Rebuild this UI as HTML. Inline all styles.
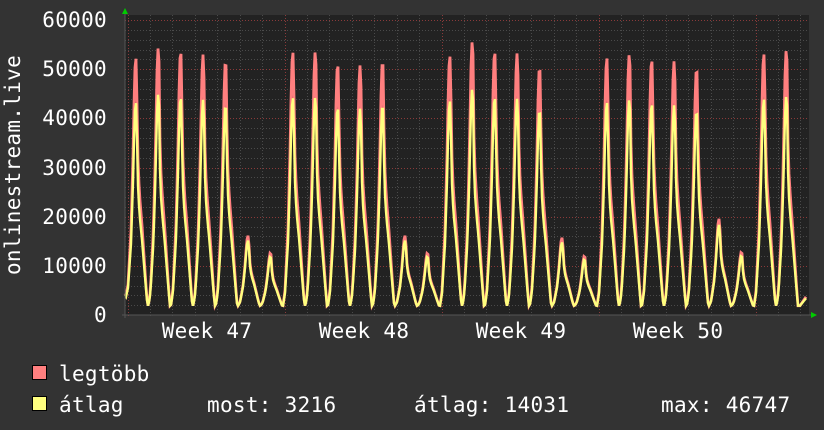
<!DOCTYPE html>
<html><head><meta charset="utf-8"><style>
body{margin:0;width:824px;height:430px;background:#333;overflow:hidden}
svg{display:block}
text{font-family:"DejaVu Sans Mono","Liberation Mono",monospace;font-size:21px;letter-spacing:0.3px;fill:#fff}
</style></head><body>
<svg id="g" width="824" height="430" xmlns="http://www.w3.org/2000/svg">
<rect x="0" y="0" width="824" height="430" fill="#333"/>
<rect x="125" y="15" width="684" height="300" fill="#222"/>
<g id="grid"></g>
<g id="data"></g>
<line x1="122" y1="315" x2="812" y2="315" fill="none" stroke="#555" stroke-width="1"/>
<line x1="125" y1="12" x2="125" y2="318" stroke="#555" stroke-width="1"/>
<polygon points="122,14 128,14 125,8" fill="#0c0"/>
<polygon points="811,312 811,318 817,315" fill="#0c0"/>
<g text-anchor="end">
<text x="107" y="27">60000</text>
<text x="107" y="76">50000</text>
<text x="107" y="125">40000</text>
<text x="107" y="175">30000</text>
<text x="107" y="224">20000</text>
<text x="107" y="273">10000</text>
<text x="107" y="322">0</text>
</g>
<text transform="translate(20,165) rotate(-90)" text-anchor="middle">onlinestream.live</text>
<g text-anchor="middle">
<text x="207" y="338">Week 47</text>
<text x="364" y="338">Week 48</text>
<text x="521" y="338">Week 49</text>
<text x="678" y="338">Week 50</text>
</g>
<rect x="32.5" y="365.5" width="14" height="14" fill="#ff7f7f" stroke="#000"/>
<rect x="32.5" y="396.5" width="14" height="14" fill="#ffff7f" stroke="#000"/>
<text x="59" y="381">legtöbb</text>
<text x="59" y="412">átlag</text>
<text x="207" y="412">most: 3216</text>
<text x="414" y="412">átlag: 14031</text>
<text x="661" y="412">max: 46747</text>
</svg>
<script>
var NS="http://www.w3.org/2000/svg";
var grid=document.getElementById('grid');
function ln(x1,y1,x2,y2,c){var l=document.createElementNS(NS,'line');l.setAttribute('x1',x1);l.setAttribute('y1',y1);l.setAttribute('x2',x2);l.setAttribute('y2',y2);l.setAttribute('stroke',c);l.setAttribute('stroke-dasharray','1,2');grid.appendChild(l);}
function Y(v){return 315-v*295/60000;}
for(var v=2000;v<=60000;v+=2000){var y=Math.round(Y(v))+0.5;ln(125,y,809,y,(v%10000==0)?'#8a3a3a':'#4a4a4a');}
for(var i=0;i<31;i++){var x=Math.round(127.5+i*22.43)+0.5;if(x>809)break;ln(x,15,x,318,(i%7==0)?'#8a3a3a':'#4a4a4a');}
var peaks=[55,48,49,53,60,235,253,49,52,62,64,60,235,253,53,42,49,52,66,237,256,55,55,57,60,67,218,252,51,51];
var B=1900;
var kd=[-10,-8,-5,-3,-1.5,-0.5,0.5,1.5,2.5,4,6,8,10,11.5];
var kv=[0,0.06,0.3,0.6,0.9,1,0.97,0.65,0.52,0.42,0.32,0.2,0.08,0];
function prof(d){if(d<=kd[0]||d>=kd[kd.length-1])return 0;for(var k=0;k<kd.length-1;k++){if(d>=kd[k]&&d<=kd[k+1]){var t=(d-kd[k])/(kd[k+1]-kd[k]);return kv[k]+t*(kv[k+1]-kv[k]);}}return 0;}
var red='',yel='';
for(var x=125;x<=806;x++){
 var vr=B,vy=B;
 for(var p=0;p<peaks.length;p++){var px=136+p*22.43;var d=x-px;if(d>-13&&d<13){var pv=(315-peaks[p])/295*60000;var A=pv-B;var big=pv>20000;var f=prof(d);vr+=A*f;vy+=A*f*(big?0.82:0.93);}}
 if(x<131){vr+=2500*(131-x)/6;vy+=2200*(131-x)/6;}
 if(x>800){vr+=300*(x-800);vy+=250*(x-800);}
 red+=(x==125?'M':'L')+x+','+Y(vr).toFixed(1);
 yel+=(x==125?'M':'L')+x+','+Y(vy).toFixed(1);
}
var d=document.getElementById('data');
d.innerHTML='<path d="'+red+'" fill="none" stroke="#ff7f7f" stroke-width="2.8"/><path d="'+yel+'" fill="none" stroke="#ffff7f" stroke-width="2.4"/>';
</script>
</body></html>
